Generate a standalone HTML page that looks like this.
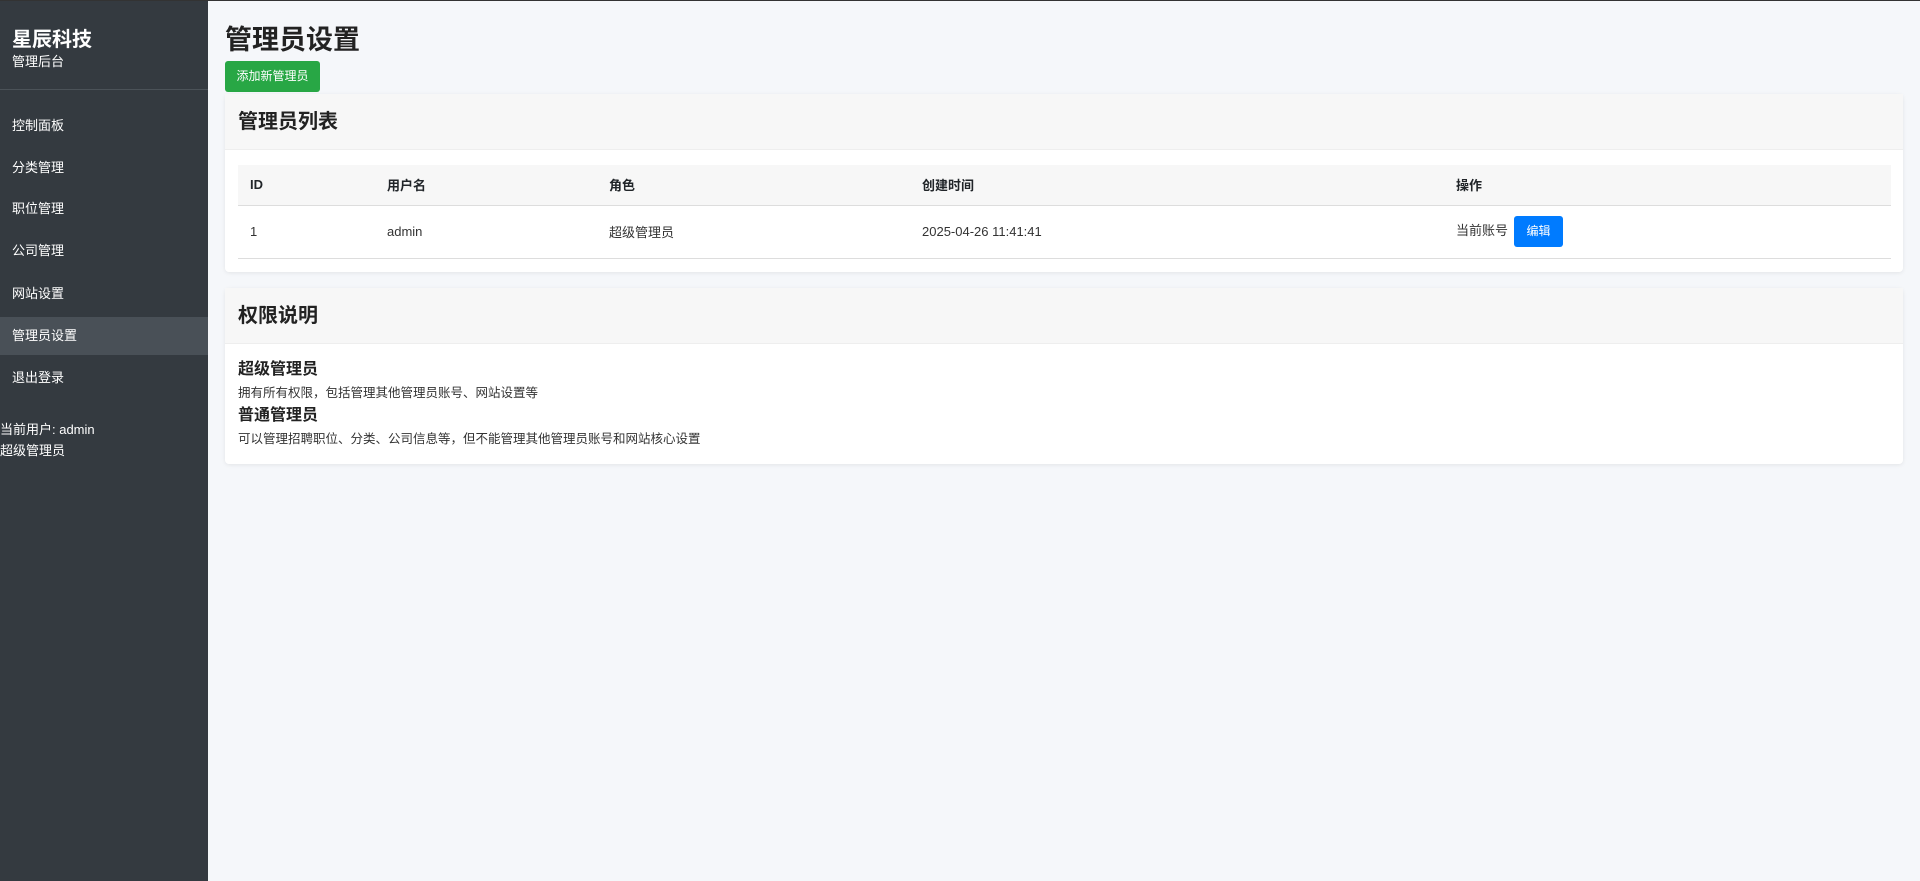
<!DOCTYPE html>
<html><head><meta charset="utf-8"><style>
*{box-sizing:border-box;margin:0;padding:0}
body{width:1920px;height:880px;overflow:hidden;background:#f5f7fa;font-family:"Liberation Sans","Noto Sans CJK SC",sans-serif;color:#212529;position:relative;border-top:1px solid #333}
.side{position:absolute;left:0;top:0;width:208px;height:880px;background:#343a40;color:#fff}
.brand{position:absolute;left:12px;top:22px;font-size:20px;font-weight:bold}
.sub{position:absolute;left:12px;top:50px;font-size:13px}
.div{position:absolute;left:0;top:88px;width:208px;height:1px;background:#4b5258}
.nav{position:absolute;left:0;width:208px;height:38px;line-height:38px;padding-left:12px;font-size:13px}
.nav.act{background:#495057}
.user{position:absolute;left:0;top:418px;font-size:13px;line-height:21px}
.main{position:absolute;left:225px;top:0;right:17px}
h1{position:absolute;left:0;top:20px;font-size:27px;font-weight:bold;color:#222;line-height:38px}
.btn{position:absolute;left:0;top:60px;width:95px;height:31px;background:#28a745;color:#fff;font-size:12px;line-height:31px;text-align:center;border-radius:3px}
.card{position:absolute;left:0;width:1678px;background:#fff;border-radius:4px;box-shadow:0 1px 4px rgba(0,0,0,.08)}
.ch{height:56px;background:#f7f7f7;border-bottom:1px solid #eee;padding-left:13px;font-size:20px;font-weight:bold;line-height:56px;color:#222}
table{position:absolute;left:13px;top:71px;width:1653px;border-collapse:collapse;font-size:13px}
th{height:40px;background:#f7f7f7;text-align:left;font-weight:bold;border-bottom:1px solid #ddd;padding-left:12px}
td{height:53px;border-bottom:1px solid #ddd;padding-left:12px;color:#333}
.eb{display:inline-block;width:49px;height:31px;background:#007bff;color:#fff;border-radius:3px;text-align:center;line-height:31px;font-size:12px;vertical-align:middle;margin-left:6px}
.cb{padding:14px 13px;line-height:22px}
.cb b{font-size:16px;display:block;color:#222;line-height:24px}
.cb p{font-size:12.5px;color:#333;line-height:22px}
</style></head><body>
<div class="side">
<div class="brand">星辰科技</div>
<div class="sub">管理后台</div>
<div class="div"></div>
<div class="nav" style="top:106px">控制面板</div>
<div class="nav" style="top:148px">分类管理</div>
<div class="nav" style="top:189px">职位管理</div>
<div class="nav" style="top:231px">公司管理</div>
<div class="nav" style="top:274px">网站设置</div>
<div class="nav act" style="top:316px">管理员设置</div>
<div class="nav" style="top:358px">退出登录</div>
<div class="user">当前用户: admin<br>超级管理员</div>
</div>
<div class="main">
<h1>管理员设置</h1>
<div class="btn">添加新管理员</div>
<div class="card" style="top:93px;height:178px">
<div class="ch">管理员列表</div>
<table>
<tr><th style="width:137px">ID</th><th style="width:222px">用户名</th><th style="width:313px">角色</th><th style="width:534px">创建时间</th><th>操作</th></tr>
<tr><td>1</td><td>admin</td><td>超级管理员</td><td>2025-04-26 11:41:41</td><td>当前账号<span class="eb">编辑</span></td></tr>
</table>
</div>
<div class="card" style="top:287px;height:176px">
<div class="ch">权限说明</div>
<div class="cb">
<b>超级管理员</b><p>拥有所有权限，包括管理其他管理员账号、网站设置等</p>
<b>普通管理员</b><p>可以管理招聘职位、分类、公司信息等，但不能管理其他管理员账号和网站核心设置</p>
</div>
</div>
</div>
</body></html>
